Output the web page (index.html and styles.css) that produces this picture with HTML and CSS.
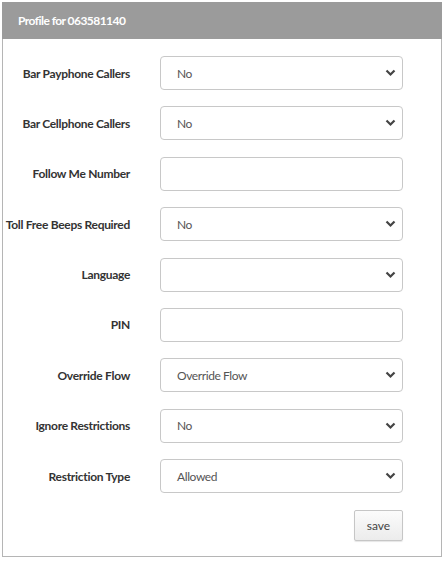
FILE: index.html
```html
<!DOCTYPE html>
<html>
<head>
<meta charset="utf-8">
<link rel="stylesheet" href="styles.css">
</head>
<body>
<div class="panel">
  <div class="panel-header">Profile for 063581140</div>
  <div class="panel-body">
    <div class="row"><div class="label">Bar Payphone Callers</div><div class="field select"><span>No</span><svg class="chev" width="11" height="8" viewBox="0 0 11 8"><path d="M1.5 1.5 L5.5 5.5 L9.5 1.5" fill="none" stroke="#444" stroke-width="2.2"/></svg></div></div>
    <div class="row"><div class="label">Bar Cellphone Callers</div><div class="field select"><span>No</span><svg class="chev" width="11" height="8" viewBox="0 0 11 8"><path d="M1.5 1.5 L5.5 5.5 L9.5 1.5" fill="none" stroke="#444" stroke-width="2.2"/></svg></div></div>
    <div class="row"><div class="label">Follow Me Number</div><div class="field"></div></div>
    <div class="row"><div class="label">Toll Free Beeps Required</div><div class="field select"><span>No</span><svg class="chev" width="11" height="8" viewBox="0 0 11 8"><path d="M1.5 1.5 L5.5 5.5 L9.5 1.5" fill="none" stroke="#444" stroke-width="2.2"/></svg></div></div>
    <div class="row"><div class="label">Language</div><div class="field select"><span></span><svg class="chev" width="11" height="8" viewBox="0 0 11 8"><path d="M1.5 1.5 L5.5 5.5 L9.5 1.5" fill="none" stroke="#444" stroke-width="2.2"/></svg></div></div>
    <div class="row"><div class="label">PIN</div><div class="field"></div></div>
    <div class="row"><div class="label">Override Flow</div><div class="field select"><span>Override Flow</span><svg class="chev" width="11" height="8" viewBox="0 0 11 8"><path d="M1.5 1.5 L5.5 5.5 L9.5 1.5" fill="none" stroke="#444" stroke-width="2.2"/></svg></div></div>
    <div class="row"><div class="label">Ignore Restrictions</div><div class="field select"><span>No</span><svg class="chev" width="11" height="8" viewBox="0 0 11 8"><path d="M1.5 1.5 L5.5 5.5 L9.5 1.5" fill="none" stroke="#444" stroke-width="2.2"/></svg></div></div>
    <div class="row"><div class="label">Restriction Type</div><div class="field select"><span>Allowed</span><svg class="chev" width="11" height="8" viewBox="0 0 11 8"><path d="M1.5 1.5 L5.5 5.5 L9.5 1.5" fill="none" stroke="#444" stroke-width="2.2"/></svg></div></div>
    <div class="actions"><button class="save">save</button></div>
  </div>
</div>
</body>
</html>
```
FILE: styles.css
```css
html, body { margin: 0; padding: 0; background: #fff; }
body { padding: 2px; font-family: "Lato", "Liberation Sans", sans-serif; }
.panel {
  width: 440px;
  height: 555px;
  box-sizing: border-box;
  border: 1px solid #b5b5b5;
  border-top: none;
}
.panel-header {
  background: #9b9b9b;
  color: #fff;
  font-weight: bold;
  font-size: 12px;
  letter-spacing: -0.55px;
  height: 37px;
  line-height: 37px;
  padding-left: 16px;
  margin: 0 -1px;
}
.panel-body {
  display: flex;
  flex-direction: column;
  gap: 16.375px;
  padding-top: 17px;
}
.row {
  display: grid;
  grid-template-columns: 127px 243px;
  column-gap: 30px;
  align-items: center;
}
.label {
  text-align: right;
  font-weight: bold;
  font-size: 12px;
  letter-spacing: -0.3px;
  color: #333;
  white-space: nowrap;
}
.field {
  height: 34px;
  box-sizing: border-box;
  border: 1px solid #c8c8c8;
  border-radius: 4px;
  background: #fff;
  display: flex;
  align-items: center;
  justify-content: space-between;
  padding: 0 6px 0 16px;
  font-size: 12px;
  letter-spacing: -0.4px;
  color: #555;
}
.actions {
  display: flex;
  justify-content: flex-end;
  padding-right: 38px;
  margin-top: 0.6px;
}
.save {
  width: 49px;
  height: 31px;
  border: 1px solid #c6c6c6;
  border-radius: 2px;
  background: linear-gradient(#fbfbfb, #ececec);
  box-shadow: 0 1px 1px rgba(0,0,0,0.1);
  font-family: "Lato", "Liberation Sans", sans-serif;
  font-size: 12px;
  color: #444;
  padding: 0;
}
```
